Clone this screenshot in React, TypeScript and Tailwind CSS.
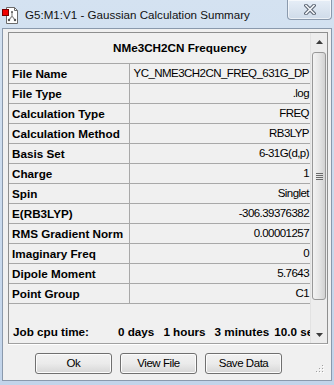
import React from "react";

const rows: [string, string][] = [
  ["File Name", "YC_NME3CH2CN_FREQ_631G_DP"],
  ["File Type", ".log"],
  ["Calculation Type", "FREQ"],
  ["Calculation Method", "RB3LYP"],
  ["Basis Set", "6-31G(d,p)"],
  ["Charge", "1"],
  ["Spin", "Singlet"],
  ["E(RB3LYP)", "-306.39376382"],
  ["RMS Gradient Norm", "0.00001257"],
  ["Imaginary Freq", "0"],
  ["Dipole Moment", "5.7643"],
  ["Point Group", "C1"],
];

function AppIcon() {
  return (
    <svg width="17" height="17" viewBox="0 0 17 17">
      {/* document */}
      <path d="M4.5 0.5 H12.5 L15.5 3.5 V16.5 H4.5 Z" fill="#fff" stroke="#6b6b6b" />
      <path d="M12.5 0.5 V3.5 H15.5" fill="none" stroke="#6b6b6b" />
      {/* molecule */}
      <path d="M10 5 V9 L7 13 M10 9 L13 13" stroke="#8a8a8a" strokeWidth="1.2" fill="none" />
      <circle cx="10" cy="5" r="1" fill="#555" />
      <circle cx="7" cy="13" r="1.2" fill="#555" />
      <circle cx="13" cy="13" r="1.2" fill="#555" />
      {/* red mark */}
      <rect x="0.5" y="2.5" width="6" height="6" fill="#f00000" stroke="#700" />
    </svg>
  );
}

function CloseButton() {
  return (
    <div className="w-[45px] h-[20px] mr-[2px] rounded-b-[4px] border border-t-0 border-[#8b9aad] bg-gradient-to-b from-[#e6eef7] to-[#cfdbe9] flex items-center justify-center shadow-[inset_0_0_0_1px_rgba(255,255,255,0.6)]">
      <svg width="12" height="11" viewBox="0 0 12 11">
        <path d="M2 1.5 L10 9.5 M10 1.5 L2 9.5" stroke="#56606e" strokeWidth="3.6" strokeLinecap="square" />
        <path d="M2 1.5 L10 9.5 M10 1.5 L2 9.5" stroke="#f4f6f9" strokeWidth="1.6" strokeLinecap="square" />
      </svg>
    </div>
  );
}

function Arrow({ up }: { up?: boolean }) {
  return (
    <div className="h-[17px] flex items-center justify-center">
      <svg width="7" height="4" viewBox="0 0 7 4">
        <path d={up ? "M0 4 L3.5 0 L7 4 Z" : "M0 0 L7 0 L3.5 4 Z"} fill="#3c3c3c" />
      </svg>
    </div>
  );
}

function Scrollbar() {
  return (
    <div className="w-[17px] flex flex-col bg-[#ededed] border-l border-[#e2e2e2]">
      <Arrow up />
      <div className="mx-[1px] mt-[2px] h-[248px] rounded-[3px] border border-[#989898] bg-gradient-to-r from-[#f3f3f3] via-[#e6e6e6] to-[#d2d2d2] flex items-center justify-center">
        <div className="flex flex-col gap-[1px]">
          <div className="w-[7px] h-[1px] bg-[#6a6a6a]" />
          <div className="w-[7px] h-[1px] bg-[#6a6a6a]" />
          <div className="w-[7px] h-[1px] bg-[#6a6a6a]" />
          <div className="w-[7px] h-[1px] bg-[#6a6a6a]" />
        </div>
      </div>
      <div className="flex-1" />
      <Arrow />
    </div>
  );
}

function Button({ label }: { label: string }) {
  return (
    <div className="w-[77px] h-[21px] rounded-[3px] border border-[#707070] bg-gradient-to-b from-[#f2f2f2] via-[#ebebeb] to-[#d6d6d6] shadow-[inset_0_0_0_1px_#fcfcfc] flex items-center justify-center text-[11.5px] tracking-[-0.45px] text-black">
      {label}
    </div>
  );
}

function Grip() {
  return (
    <svg width="10" height="10" viewBox="0 0 10 10">
      {[
        [8, 0],
        [5, 3],
        [8, 3],
        [2, 6],
        [5, 6],
        [8, 6],
      ].map(([x, y]) => (
        <g key={`${x}-${y}`}>
          <rect x={x + 1} y={y + 1} width="1" height="1" fill="#fff" />
          <rect x={x} y={y} width="1" height="1" fill="#a0a0a0" />
        </g>
      ))}
    </svg>
  );
}

export default function App() {
  return (
    <div
      className="w-[334px] h-[385px] flex flex-col bg-gradient-to-b from-[#d4e2f1] to-[#c2d4ea] overflow-hidden"
      style={{ fontFamily: '"Liberation Sans", Arial, sans-serif' }}
    >
      {/* title bar */}
      <div className="h-[28px] flex items-start">
        <div className="pt-[7px] pl-[2px]">
          <AppIcon />
        </div>
        <div className="ml-[6px] mt-[8px] text-[11.6px] leading-[14px] text-[#111]">
          G5:M1:V1 - Gaussian Calculation Summary
        </div>
        <div className="ml-auto">
          <CloseButton />
        </div>
      </div>

      {/* client area */}
      <div className="mx-[2px] h-[353px] border border-[#8a99ac] bg-[#f0f0f0] flex flex-col">
        <div className="ml-[5px] mt-[3px] w-[320px] h-[312px] border border-[#8e8f8f] border-b-[#a0a0a0] flex shadow-[0_1px_0_#ffffff]">
          <div className="w-[301px] flex flex-col overflow-hidden">
            <div className="h-[31px] border-b border-[#a8a8a8] flex items-center pl-[104px] font-bold text-[11.7px] whitespace-nowrap">
              NMe3CH2CN Frequency
            </div>
            {rows.map(([label, value]) => (
              <div key={label} className="h-[20px] border-b border-[#a8a8a8] flex">
                <div className="w-[121px] border-r border-[#a8a8a8] flex items-center pl-[3px] font-bold text-[11.7px] whitespace-nowrap">
                  {label}
                </div>
                <div className="flex-1 flex items-center justify-end overflow-hidden pr-[1px] text-[11.5px] tracking-[-0.55px] whitespace-nowrap">
                  {value}
                </div>
              </div>
            ))}
            <div className="flex-1 flex items-end pb-[4px] pl-[4px] font-bold text-[11.7px] leading-[14px] whitespace-nowrap overflow-hidden">
              <span>Job cpu time:</span>
              <span className="ml-[29px]">0 days</span>
              <span className="ml-[9px]">1 hours</span>
              <span className="ml-[9px]">3 minutes</span>
              <span className="ml-[5px]">10.0 seconds</span>
            </div>
          </div>
          <Scrollbar />
        </div>

        <div className="flex-1 flex items-start pl-[32px] pt-[9px]">
          <div className="flex gap-[8px]">
            <Button label="Ok" />
            <Button label="View File" />
            <Button label="Save Data" />
          </div>
          <div className="ml-auto mr-[7px] self-end mb-[5px]">
            <Grip />
          </div>
        </div>
      </div>
    </div>
  );
}
